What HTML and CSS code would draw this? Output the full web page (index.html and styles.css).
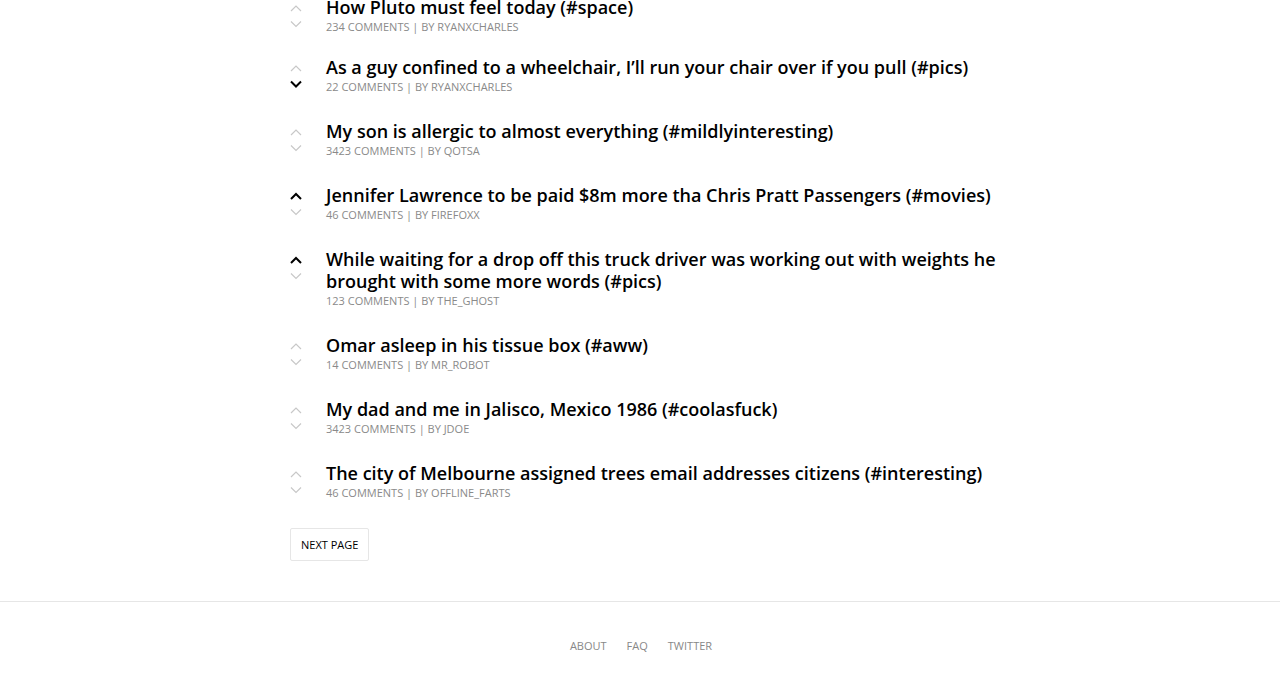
FILE: index.html
```html
<!DOCTYPE html>
<html>
<head>
<meta charset="utf-8">
<link rel="stylesheet" href="styles.css">
</head>
<body>
<main class="wrap">
  <ul class="posts">
    <li class="post">
      <div class="vote"><svg class="arr" viewBox="0 0 12 16"><path d="M1 11 L6 6 L11 11"/></svg><svg class="arr" viewBox="0 0 12 16"><path d="M1 5.5 L6 10.5 L11 5.5"/></svg></div>
      <div class="body"><h2 class="title">How Pluto must feel today (#space)</h2><div class="meta">234 comments <span class="sep">|</span> by ryanxcharles</div></div>
    </li>
    <li class="post">
      <div class="vote"><svg class="arr" viewBox="0 0 12 16"><path d="M1 11 L6 6 L11 11"/></svg><svg class="arr on" viewBox="0 0 12 16"><path d="M1 5.5 L6 10.5 L11 5.5"/></svg></div>
      <div class="body"><h2 class="title">As a guy confined to a wheelchair, I’ll run your chair over if you pull (#pics)</h2><div class="meta">22 comments <span class="sep">|</span> by ryanxcharles</div></div>
    </li>
    <li class="post">
      <div class="vote"><svg class="arr" viewBox="0 0 12 16"><path d="M1 11 L6 6 L11 11"/></svg><svg class="arr" viewBox="0 0 12 16"><path d="M1 5.5 L6 10.5 L11 5.5"/></svg></div>
      <div class="body"><h2 class="title">My son is allergic to almost everything (#mildlyinteresting)</h2><div class="meta">3423 comments <span class="sep">|</span> by qotsa</div></div>
    </li>
    <li class="post">
      <div class="vote"><svg class="arr on" viewBox="0 0 12 16"><path d="M1 11 L6 6 L11 11"/></svg><svg class="arr" viewBox="0 0 12 16"><path d="M1 5.5 L6 10.5 L11 5.5"/></svg></div>
      <div class="body"><h2 class="title">Jennifer Lawrence to be paid $8m more tha Chris Pratt Passengers (#movies)</h2><div class="meta">46 comments <span class="sep">|</span> by firefoxx</div></div>
    </li>
    <li class="post">
      <div class="vote"><svg class="arr on" viewBox="0 0 12 16"><path d="M1 11 L6 6 L11 11"/></svg><svg class="arr" viewBox="0 0 12 16"><path d="M1 5.5 L6 10.5 L11 5.5"/></svg></div>
      <div class="body"><h2 class="title">While waiting for a drop off this truck driver was working out with weights he brought with some more words (#pics)</h2><div class="meta">123 comments <span class="sep">|</span> by the_ghost</div></div>
    </li>
    <li class="post">
      <div class="vote"><svg class="arr" viewBox="0 0 12 16"><path d="M1 11 L6 6 L11 11"/></svg><svg class="arr" viewBox="0 0 12 16"><path d="M1 5.5 L6 10.5 L11 5.5"/></svg></div>
      <div class="body"><h2 class="title">Omar asleep in his tissue box (#aww)</h2><div class="meta">14 comments <span class="sep">|</span> by mr_robot</div></div>
    </li>
    <li class="post">
      <div class="vote"><svg class="arr" viewBox="0 0 12 16"><path d="M1 11 L6 6 L11 11"/></svg><svg class="arr" viewBox="0 0 12 16"><path d="M1 5.5 L6 10.5 L11 5.5"/></svg></div>
      <div class="body"><h2 class="title">My dad and me in Jalisco, Mexico 1986 (#coolasfuck)</h2><div class="meta">3423 comments <span class="sep">|</span> by jdoe</div></div>
    </li>
    <li class="post">
      <div class="vote"><svg class="arr" viewBox="0 0 12 16"><path d="M1 11 L6 6 L11 11"/></svg><svg class="arr" viewBox="0 0 12 16"><path d="M1 5.5 L6 10.5 L11 5.5"/></svg></div>
      <div class="body"><h2 class="title">The city of Melbourne assigned trees email addresses citizens (#interesting)</h2><div class="meta">46 comments <span class="sep">|</span> by offline_farts</div></div>
    </li>
  </ul>
  <a class="next" href="#">Next page</a>
</main>
<footer class="footer">
  <nav class="links"><a href="#">About</a><a href="#">FAQ</a><a href="#">Twitter</a></nav>
</footer>
</body>
</html>
```
FILE: styles.css
```css
html, body { margin: 0; padding: 0; background: #fff; }
body { font-family: "Open Sans", "Liberation Sans", sans-serif; color: #000; }
.wrap { width: 710px; margin: -4px auto 0; padding-left: 10px; }
.posts { list-style: none; margin: 0; padding: 0; }
.post { display: flex; margin-bottom: 24px; }
.post:first-child { margin-bottom: 20px; }
.vote { width: 36px; flex: none; display: flex; flex-direction: column; padding-top: 4px; }
.arr { width: 12px; height: 16px; display: block; fill: none; stroke: #c8c8c8; stroke-width: 1.2; }
.arr.on { stroke: #000; stroke-width: 2; }
.body { flex: 1; min-width: 0; }
.title { margin: 0; font-size: 18px; line-height: 22px; font-weight: 600; color: #000; }
.meta { font-size: 11px; line-height: 18px; text-transform: uppercase; color: #8a8a8a; }
.next { display: inline-block; margin-top: 2px; padding: 9px 10px; border: 1px solid #e6e6e6; border-radius: 2px; font-size: 11px; line-height: 13px; text-transform: uppercase; color: #000; text-decoration: none; }
.footer { margin-top: 40px; border-top: 1px solid #e6e6e6; padding: 36px 0 38px; }
.links { display: flex; justify-content: center; gap: 20px; padding-left: 2px; }
.links a { font-size: 11px; line-height: 16px; text-transform: uppercase; color: #888; text-decoration: none; }
```
